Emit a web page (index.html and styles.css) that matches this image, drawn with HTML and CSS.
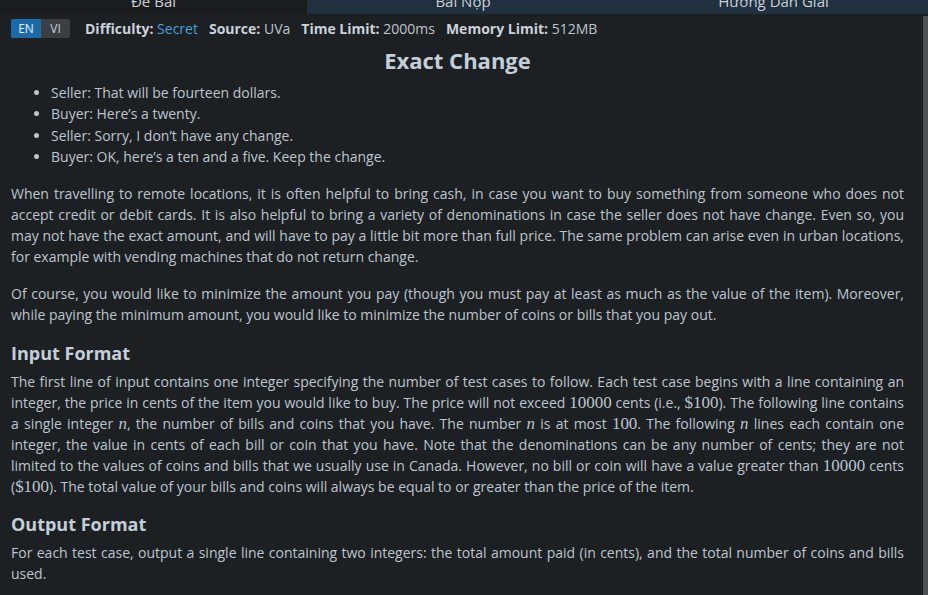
FILE: index.html
```html
<!DOCTYPE html>
<html lang="en">
<head>
<meta charset="utf-8">
<title>Exact Change</title>
<link rel="stylesheet" href="styles.css">
</head>
<body>
<nav class="tabs">
  <div class="tab tab-active">Đề Bài</div>
  <div class="tab">Bài Nộp</div>
  <div class="tab">Hướng Dẫn Giải</div>
</nav>
<div class="shell">
<main class="page">
  <div class="meta">
    <div class="lang">
      <span class="lang-btn lang-on">EN</span>
      <span class="lang-btn">VI</span>
    </div>
    <span class="meta-item"><b>Difficulty:</b> <span class="link">Secret</span></span>
    <span class="meta-item"><b>Source:</b> UVa</span>
    <span class="meta-item"><b>Time Limit:</b> 2000ms</span>
    <span class="meta-item"><b>Memory Limit:</b> 512MB</span>
  </div>
  <h1 class="title">Exact Change</h1>
  <ul class="dialog">
    <li>Seller: That will be fourteen dollars.</li>
    <li>Buyer: Here’s a twenty.</li>
    <li>Seller: Sorry, I don’t have any change.</li>
    <li>Buyer: OK, here’s a ten and a five. Keep the change.</li>
  </ul>
  <p class="first">When travelling to remote locations, it is often helpful to bring cash, in case you want to buy something from someone who does not accept credit or debit cards. It is also helpful to bring a variety of denominations in case the seller does not have change. Even so, you may not have the exact amount, and will have to pay a little bit more than full price. The same problem can arise even in urban locations, for example with vending machines that do not return change.</p>
  <p>Of course, you would like to minimize the amount you pay (though you must pay at least as much as the value of the item). Moreover, while paying the minimum amount, you would like to minimize the number of coins or bills that you pay out.</p>
  <h2 class="section">Input Format</h2>
  <p class="after-h">The first line of input contains one integer specifying the number of test cases to follow. Each test case begins with a line containing an integer, the price in cents of the item you would like to buy. The price will not exceed <span class="math">10000</span> cents (i.e., <span class="math">$100</span>). The following line contains a single integer <span class="math mi">n</span>, the number of bills and coins that you have. The number <span class="math mi">n</span> is at most <span class="math">100</span>. The following <span class="math mi">n</span> lines each contain one integer, the value in cents of each bill or coin that you have. Note that the denominations can be any number of cents; they are not limited to the values of coins and bills that we usually use in Canada. However, no bill or coin will have a value greater than <span class="math">10000</span> cents (<span class="math">$100</span>). The total value of your bills and coins will always be equal to or greater than the price of the item.</p>
  <h2 class="section">Output Format</h2>
  <p class="after-h">For each test case, output a single line containing two integers: the total amount paid (in cents), and the total number of coins and bills used.</p>
</main>
<div class="scrollbar"></div>
</div>
</body>
</html>
```
FILE: styles.css
```css
html, body {
  margin: 0;
  padding: 0;
  background: #1d2023;
  overflow: hidden;
}
body {
  font-family: "Open Sans", "Noto Sans", sans-serif;
  font-size: 14px;
  color: #bcc5ce;
  width: 928px;
  height: 595px;
}
.tabs {
  display: grid;
  grid-template-columns: 307px 312px 1fr;
  height: 26px;
  margin-top: -12px;
  background: #21303f;
}
.tab {
  display: flex;
  align-items: center;
  justify-content: center;
  font-size: 15px;
  color: #c9d1d9;
}
.tab-active {
  background: #1a1c1e;
}
.shell {
  display: flex;
  height: 581px;
}
.page {
  flex: 1;
  min-width: 0;
  overflow: hidden;
  padding: 0 19px 0 11px;
}
.scrollbar {
  flex: 0 0 5px;
  margin-top: 2px;
  background: #4d5054;
}
.meta {
  display: flex;
  align-items: center;
  margin-top: 5px;
  height: 19px;
  gap: 11px;
  color: #bcc5ce;
}
.meta b {
  color: #c9d2db;
  font-weight: 700;
}
.meta-item {
  white-space: nowrap;
}
.link {
  color: #4a9fdb;
}
.lang {
  display: flex;
  height: 19px;
  border-radius: 2px;
  overflow: hidden;
  margin-right: 4px;
}
.lang-btn {
  display: flex;
  align-items: center;
  justify-content: center;
  width: 29px;
  font-size: 12px;
  background: #3b3f43;
  color: #c9d1d9;
}
.lang-on {
  width: 30px;
  background: #1d6aa8;
  color: #e6eef5;
}
.title {
  margin: 7px 0 0;
  text-align: center;
  font-size: 22px;
  line-height: 30px;
  font-weight: 700;
  color: #c4ced8;
}
.dialog {
  margin: 7px 0 0;
  padding-left: 40px;
  line-height: 21.3px;
}
p {
  margin: 16px 0 0;
  line-height: 21px;
  text-align: justify;
}
.section {
  margin: 15.5px 0 0;
  font-size: 18px;
  line-height: 24px;
  font-weight: 700;
  color: #c4ced8;
}
p.after-h {
  margin-top: 6px;
}
.math {
  font-family: "Liberation Serif", "DejaVu Serif", serif;
  font-size: 1.21em;
  line-height: 1;
}
.mi {
  font-style: italic;
}
```
